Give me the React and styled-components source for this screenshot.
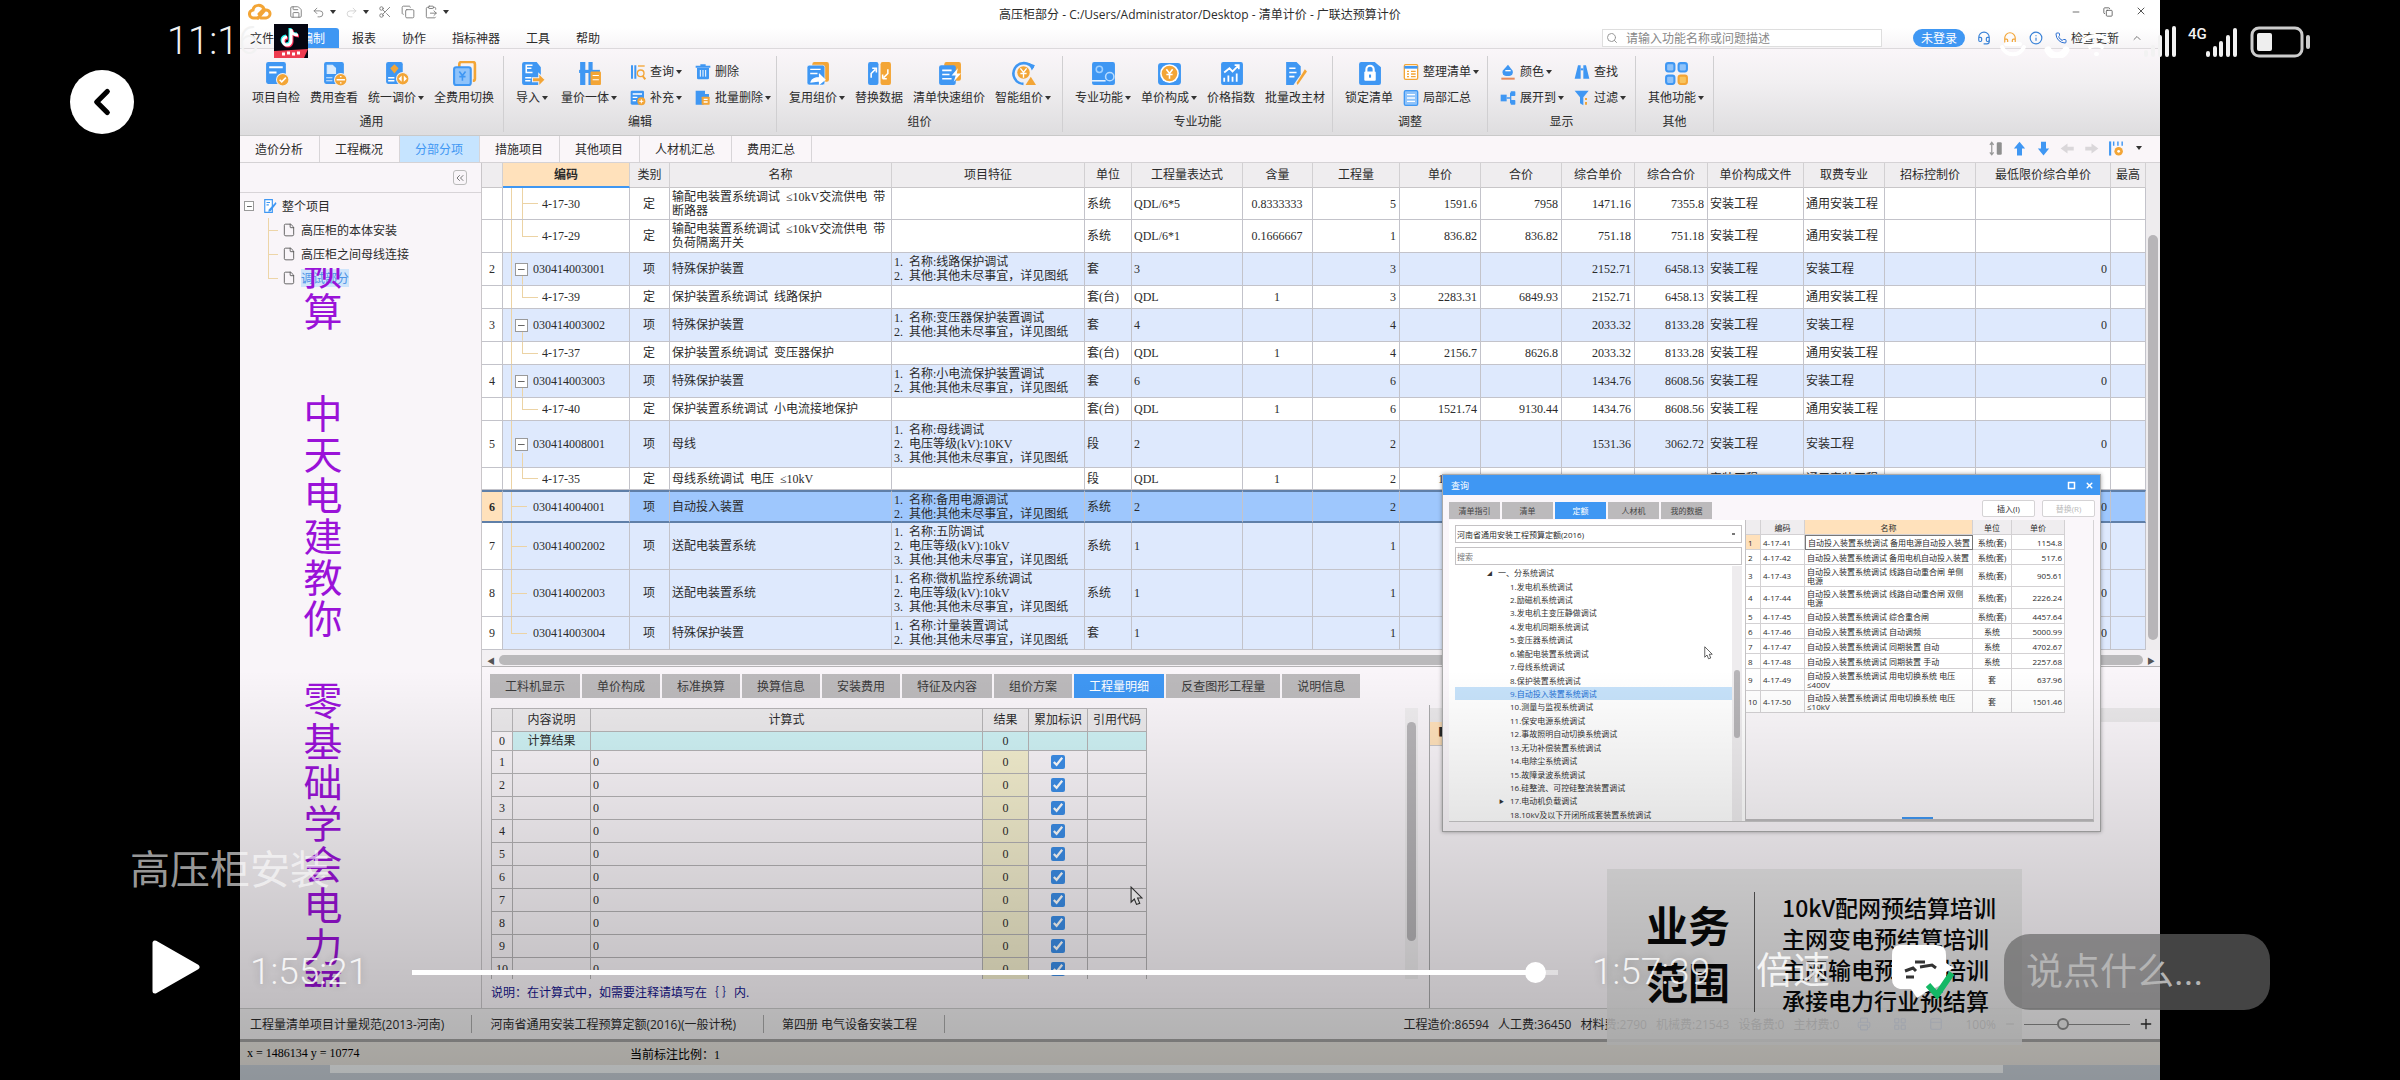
import React from 'react';
import styled, { createGlobalStyle, css } from 'styled-components';
import {
    Save, Undo2, Redo2, Scissors, Copy, ClipboardPaste, Search, Headphones, Headset, Info, Phone,
    ChevronUp, ChevronLeft, ChevronsLeft, File, X, Minus, Plus, Printer, LayoutGrid, PanelTop,
} from 'lucide-react';

const BLUE = '#3f97f3';
const ORANGE = '#f3a536';

const GlobalStyle = createGlobalStyle`
    * { box-sizing: border-box; }
    body {
        margin: 0;
        background: #000;
        overflow: hidden;
        font-family: 'Open Sans', 'Noto Sans CJK SC', sans-serif;
        font-size: 12px;
        color: #2b2b2b;
    }
    button, input, select { font: inherit; color: inherit; margin: 0; }
    button { border: 0; padding: 0; background: none; cursor: pointer; }
    table { border-spacing: 0; table-layout: fixed; }
`;

const Page = styled.main`
    position: relative;
    display: flex;
    height: 100vh;
    padding: 0 10%;
    background: #000;
`;

const Desktop = styled.div`
    position: relative;
    display: flex;
    flex: 1;
    flex-direction: column;
    min-width: 0;
    overflow: hidden;
    background: #f9f5f9;
    white-space: nowrap;
`;

const TitleBar = styled.header`
    display: grid;
    grid-template-columns: 1fr auto 1fr;
    align-items: center;
    height: 28px;
    background: #fff;
`;

const QuickTools = styled.div`
    display: flex;
    align-items: center;
    gap: 9px;
    padding: 0 0 4px 8px;
    color: #777;
    > svg:first-child { margin-right: 8px; }
    > span { margin-left: -4px; }
`;

const WindowButtons = styled.div`
    display: flex;
    justify-content: flex-end;
    align-items: center;
    gap: 22px;
    padding: 0 13px 4px 0;
    color: #555;
`;

const MenuBar = styled.nav`
    display: flex;
    align-items: center;
    height: 21px;
    background: linear-gradient(#fff, #f6f4f6);
    border-bottom: 1px solid #dcd9dc;
`;

const MenuItem = styled.button`
    height: 20px;
    padding: 0 13px;
    &:first-child { padding-left: 10px; }
    ${props => props.$active && css`
        padding: 0 14px;
        color: #fff;
        background: ${BLUE};
        border-radius: 3px 3px 0 0;
    `}
`;

const SearchBox = styled.label`
    display: flex;
    align-items: center;
    gap: 8px;
    width: 280px;
    height: 18px;
    margin-left: auto;
    padding: 0 3px;
    color: #999;
    background: #fff;
    border: 1px solid #dedede;
    input { flex: 1; min-width: 0; padding: 0; border: 0; outline: 0; background: none; }
    input::placeholder { color: #888; }
`;

const Account = styled.div`
    display: flex;
    align-items: center;
    gap: 12px;
    width: 278px;
    padding-left: 31px;
    color: #3a83d8;
`;

const LoginButton = styled.button`
    width: 52px;
    height: 18px;
    color: #fff;
    background: ${BLUE};
    border-radius: 9px;
`;

const UpdateButton = styled.button`
    display: flex;
    align-items: center;
    gap: 4px;
    color: #333;
    svg { color: #2b6fd2; }
`;

const Ribbon = styled.section`
    display: flex;
    height: 87px;
    padding: 7px 0 3px;
    background: linear-gradient(#faf6f9, #f1eff1 40%, #dedddf);
    border-bottom: 1px solid #c9c9c9;
`;

const RibbonGroup = styled.div`
    display: flex;
    flex-direction: column;
    width: ${props => props.$width}px;
    border-right: 1px solid #d0cfd1;
`;

const GroupTools = styled.div`
    display: flex;
    gap: ${props => props.$gap || 10}px;
    height: 58px;
    padding: 5px 0 0 12px;
`;

const GroupName = styled.div`
    line-height: 20px;
    text-align: center;
`;

const BigButton = styled.button`
    display: flex;
    flex-direction: column;
    align-items: center;
    gap: 3px;
    line-height: 18px;
`;

const SmallColumn = styled.div`
    display: flex;
    flex-direction: column;
    gap: 8px;
    padding-top: 2px;
`;

const SmallButton = styled.button`
    display: flex;
    align-items: center;
    gap: 4px;
    height: 18px;
    line-height: 18px;
`;

const Caret = styled.span`
    display: inline-block;
    margin-left: 2px;
    vertical-align: 2px;
    border: 3px solid transparent;
    border-top: 4px solid #333;
    border-bottom: 0;
`;

const SheetTabs = styled.nav`
    display: flex;
    height: 27px;
    background: #faf6f9;
    border-bottom: 1px solid #d5d2d5;
`;

const SheetTab = styled.button`
    padding: 0 16px 0 15px;
    border-right: 1px solid #d8d5d8;
    ${props => props.$active && css`
        color: #3f97f3;
        background: #c6e4ff;
    `}
`;

const SheetTools = styled.div`
    display: flex;
    align-items: center;
    gap: 9px;
    margin-left: auto;
    padding: 0 18px 2px 0;
`;

const Body = styled.div`
    display: flex;
    flex: 1;
    min-height: 0;
`;

const Sidebar = styled.aside`
    width: 242px;
    border-right: 1px solid #c9c6c9;
`;

const SidebarHead = styled.div`
    display: flex;
    justify-content: flex-end;
    align-items: center;
    height: 30px;
    padding-right: 14px;
    border-bottom: 1px solid #d8d4d8;
    button {
        display: flex;
        align-items: center;
        width: 14px;
        height: 15px;
        color: #777;
        border: 1px solid #bbb;
        border-radius: 3px;
    }
`;

const ProjectTree = styled.ul`
    margin: 0;
    padding: 1px 0 0 4px;
    list-style: none;
    ul {
        margin: 0;
        padding: 0;
        list-style: none;
        background:
            linear-gradient(#edd5a8, #edd5a8) 24px 0 / 1px 60px no-repeat;
    }
    li > div {
        display: flex;
        align-items: center;
        height: 24px;
    }
`;

const RootNode = styled.div`
    gap: 5px;
    svg { margin-left: 4px; }
`;

const LeafNode = styled.div`
    gap: 5px;
    padding-left: 38px;
    color: ${props => props.$active ? '#4d93e6' : 'inherit'};
    background: linear-gradient(#edd5a8, #edd5a8) 24px 50% / 10px 1px no-repeat;
    svg { color: #555; }
    span { background: ${props => props.$active ? '#cfe5fb' : 'none'}; }
`;

const Expander = styled.button`
    width: ${props => props.$size || 10}px;
    height: ${props => props.$size || 10}px;
    padding: 0 2px;
    background: linear-gradient(#666, #666) center / 60% 1px no-repeat #fff;
    border: 1px solid #9a9a9a;
`;

const Work = styled.section`
    display: flex;
    flex: 1;
    flex-direction: column;
    min-width: 0;
`;

const GridArea = styled.div`
    display: flex;
`;

const VScroll = styled.div`
    flex: none;
    width: ${props => props.$width}px;
    padding: ${props => props.$offset}px 2px 0;
    background: #eeecee;
    &::after {
        content: '';
        display: block;
        height: ${props => props.$thumb}px;
        background: #b7b5b8;
        border-radius: 5px;
    }
`;

const BillTable = styled.table`
    flex: 1;
    width: 100%;
    min-width: 0;
    background: #fff;
    font-family: 'Liberation Serif', 'Noto Sans CJK SC', serif;
    line-height: 14px;
    th {
        height: 25px;
        padding: 0;
        font-weight: 400;
        overflow: hidden;
        background: #efedef;
        border-right: 1px solid #d2d0d2;
        border-bottom: 1px solid #c8c6c8;
    }
    td {
        padding: 0 3px 0 2px;
        border-right: 1px solid #c3c3ca;
        border-bottom: 1px solid #c3c3ca;
        white-space: pre;
        overflow: hidden;
    }
`;

const CodeHead = styled.th`
    && {
        font-weight: 700;
        background: #ffe1bb;
        border-bottom: 2px solid ${BLUE};
    }
`;

const BillRow = styled.tr`
    height: ${props => props.$height}px;
    background: ${props => props.$item ? '#dee9fd' : '#fff'};
    ${props => props.$selected && css`
        background: #9ec7fd;
        td { border-top: 2px solid #5f7fa8; border-bottom: 2px solid #5f7fa8; }
    `}
`;

const RowNumber = styled.td`
    && {
        padding: 0;
        text-align: center;
        background: ${props => props.$selected ? '#ffe1bb' : '#fff'};
        font-weight: ${props => props.$selected ? 700 : 400};
    }
`;

const line = 'linear-gradient(#ecd3a4, #ecd3a4)';
const branches = {
    sub: `${line} 19px 0 / 1px 50% no-repeat, ${line} 19px 50% / 16px 1px no-repeat,`,
    subOpen: `${line} 19px 0 / 1px 100% no-repeat, ${line} 19px 50% / 16px 1px no-repeat,`,
    open: `${line} 19px 100% / 1px 30% no-repeat,`,
    leaf: `${line} 8px 50% / 16px 1px no-repeat,`,
};

const CodeCell = styled.td`
    && {
        padding-left: ${props => ({ sub: 39, subOpen: 39, open: 12, leaf: 30 })[props.$kind]}px;
        background:
            ${props => branches[props.$kind]}
            ${line} 8px 0 / 1px ${props => props.$last ? '50%' : '100%'} no-repeat
            ${props => props.$kind.startsWith('sub') ? '#fff' : '#dee9fd'};
    }
    button { margin-right: 5px; vertical-align: middle; }
`;

const Cell = styled.td`
    text-align: ${props => props.$align || 'left'};
`;

const HScroll = styled.div`
    display: flex;
    align-items: center;
    gap: 4px;
    height: 17px;
    padding: 4px 5px 0;
    background: #f3f0f3;
    border-bottom: 1px solid #b5b3b5;
    font-size: 8px;
    color: #555;
    &::before { content: '◀'; }
    &::after { content: '▶'; }
    span { flex: 1; height: 10px; background: #bab9bb; border-radius: 5px; }
`;

const DetailTabs = styled.nav`
    display: flex;
    gap: 2px;
    padding: 7px 8px;
`;

const DetailTab = styled.button`
    height: 24px;
    padding: 0 15px;
    color: ${props => props.$active ? '#fff' : '#3a3a3a'};
    background: ${props => props.$active ? BLUE : '#bbb9bb'};
`;

const Lower = styled.div`
    display: flex;
    flex: 1;
    min-height: 0;
`;

const Formulas = styled.div`
    display: flex;
    flex-direction: column;
    flex: none;
    width: 948px;
    padding-top: 3px;
    border-right: 1px solid #a9a9ab;
`;

const FormulaScroll = styled.div`
    display: flex;
    flex: 1;
    justify-content: space-between;
    min-height: 0;
    padding: 0 11px 0 9px;
    overflow: hidden;
`;

const FormulaTable = styled.table`
    width: 655px;
    height: max-content;
    border-top: 1px solid #b5b3b5;
    border-left: 1px solid #b5b3b5;
    font-family: 'Liberation Serif', 'Noto Sans CJK SC', serif;
    th, td {
        padding: 0 2px;
        line-height: 16px;
        border-right: 1px solid #b5b3b5;
        border-bottom: 1px solid #b5b3b5;
    }
    th { height: 23px; font-weight: 400; background: #ebe9eb; }
    tr { height: 23px; }
`;

const FormulaCell = styled.td`
    text-align: ${props => props.$left ? 'left' : 'center'};
    background: ${props => props.$result ? '#f4efcf' : 'transparent'};
    input { display: block; width: 14px; height: 14px; margin: 0 auto; accent-color: #3c8ee8; }
`;

const TotalRow = styled.tr`
    && { height: 19px; }
    td { text-align: center; background: #cff2f5; }
    td:first-child { background: #faf6f9; }
`;

const Hint = styled.p`
    margin: 0;
    padding: 4px 9px 6px;
    line-height: 19px;
    color: #14148c;
`;

const CodePane = styled.div`
    flex: 1;
    padding-top: 3px;
    &::before {
        content: '';
        display: block;
        height: 14px;
        background: #e9e7e9;
    }
    &::after {
        content: '■';
        display: block;
        width: 60px;
        height: 23px;
        padding-left: 8px;
        line-height: 22px;
        background: #ffe1bb;
        border-bottom: 1px solid #c9c6c9;
    }
`;

const StatusBar = styled.footer`
    display: flex;
    align-items: center;
    height: 34px;
    padding: 0 6px 0 10px;
    background: #efeeef;
    border-top: 1px solid #c9c9c9;
    border-bottom: 3px solid #a2a1a0;
`;

const StatusPart = styled.span`
    margin-right: 18px;
    padding-right: 27px;
    border-right: 1px solid #aaa;
`;

const Totals = styled.span`
    display: flex;
    gap: 9px;
    margin-left: auto;
`;

const ViewButtons = styled.div`
    display: flex;
    gap: 22px;
    padding: 0 22px 0 18px;
    color: #5a83d8;
    button { display: flex; }
`;

const Zoom = styled.div`
    display: flex;
    align-items: center;
    gap: 8px;
    input {
        width: 106px;
        height: 20px;
        appearance: none;
        background: linear-gradient(#888, #888) center / 100% 1px no-repeat;
    }
    input::-webkit-slider-thumb {
        width: 12px;
        height: 12px;
        appearance: none;
        background: #e6e6e6;
        border: 2px solid #8b8b8b;
        border-radius: 50%;
    }
`;

const CadBar = styled.footer`
    display: flex;
    align-items: center;
    height: 23px;
    padding-left: 7px;
    background: #e3e0da;
    font-family: 'Liberation Serif', 'Noto Sans CJK SC', serif;
    color: #000;
    span { width: 383px; }
`;

const CadStrip = styled.div`
    height: 15px;
    padding: 0 157px 0 90px;
    background: #c6ced6;
    &::before {
        content: '';
        display: block;
        height: 8px;
        background: #f0f4f5;
    }
`;

const Dialog = styled.section`
    position: absolute;
    top: 474px;
    right: 59px;
    bottom: 248px;
    display: flex;
    flex-direction: column;
    width: 659px;
    background: #faf6fa;
    border: 1px solid #aaa;
    box-shadow: 0 0 4px rgba(0, 0, 0, 0.35);
    font-size: 8px;
`;

const DialogTitle = styled.header`
    display: flex;
    flex: none;
    align-items: center;
    justify-content: space-between;
    height: 20px;
    padding: 0 6px 0 8px;
    font-size: 9px;
    color: #fff;
    background: ${BLUE};
    div { display: flex; gap: 9px; }
`;

const DialogBar = styled.div`
    display: flex;
    align-items: flex-end;
    gap: 2px;
    height: 24px;
    padding-left: 6px;
`;

const DialogTab = styled.button`
    width: 51px;
    height: 17px;
    color: ${props => props.$active ? '#fff' : '#444'};
    background: ${props => props.$active ? BLUE : '#bcbabc'};
`;

const DialogActions = styled.div`
    display: flex;
    gap: 7px;
    margin-left: auto;
    padding: 0 5px 2px 0;
    button {
        width: 53px;
        height: 17px;
        background: #fff;
        border: 1px solid #d5d3d5;
        border-radius: 2px;
    }
    button:disabled { color: #bbb; }
`;

const DialogBody = styled.div`
    display: flex;
    flex: 1;
    min-height: 0;
    margin: 1px 6px 9px;
    border-bottom: 1px solid #c9c7c9;
`;

const NormPane = styled.div`
    display: flex;
    flex-direction: column;
    width: 297px;
    padding: 5px 3px 0 6px;
    background: #fff;
    border-right: 1px solid #c4c2c4;
    > select, > input {
        flex: none;
        width: 100%;
        height: 18px;
        margin-bottom: 4px;
        padding: 0 1px;
        appearance: none;
        background: #fff;
        border: 1px solid #c4c2c4;
        border-radius: 0;
    }
    > select {
        background: linear-gradient(#777, #777) 98% 50% / 3px 2px no-repeat #fff;
    }
    > input { margin-bottom: 1px; }
`;

const NormList = styled.div`
    display: flex;
    flex: 1;
    min-height: 0;
    ul {
        display: flex;
        flex: 1;
        flex-direction: column;
        margin: 0;
        padding: 0;
        list-style: none;
        overflow: hidden;
    }
`;

const NormItem = styled.li`
    display: flex;
    flex: 1;
    align-items: center;
    min-height: 0;
    padding-left: ${props => props.$root ? 32 : 44}px;
    color: ${props => props.$active ? '#1c6fd4' : '#333'};
    background: ${props => props.$active ? '#c6e2fa' : 'none'};
    &::before {
        content: '${props => props.$mark || ''}';
        width: 11px;
        font-size: 5px;
    }
`;

const NormResults = styled.div`
    flex: 1;
    background: linear-gradient(90deg, transparent 45%, ${BLUE} 45%, ${BLUE} 54%, transparent 54%) bottom / 100% 2px no-repeat, #faf7fa;
    border-right: 1px solid #d5d3d5;
    border-bottom: 2px solid #bdbbbd;
`;

const NormTable = styled.table`
    width: 319px;
    background: #fff;
    line-height: 9px;
    th, td {
        padding: 0 2px;
        font-weight: 400;
        white-space: pre;
        overflow: hidden;
        border-right: 1px solid #d3d1d3;
        border-bottom: 1px solid #d3d1d3;
    }
    th { height: 15px; background: #efedef; }
    th:nth-child(3) { background: #ffe1bb; }
    tbody tr:first-child td:first-child { background: #ffe1bb; }
    tbody tr:first-child td:nth-child(3) { border: 1px solid #777; }
    td:nth-child(4) { text-align: center; }
    td:nth-child(5) { text-align: right; }
`;

const NormRow = styled.tr`
    height: ${props => props.$tall ? 22 : 15}px;
`;

const Slogan = styled.div`
    position: absolute;
    top: 268px;
    left: 63px;
    width: 40px;
    height: 719px;
    overflow: hidden;
    font-size: 39px;
    line-height: 41px;
    text-align: center;
    color: #9a12d8;
    div:first-child { margin-top: -19px; }
    div { margin-bottom: 61px; white-space: pre-line; }
    div + div { margin-bottom: 41px; }
`;

const Banner = styled.section`
    position: absolute;
    right: 138px;
    bottom: 35px;
    display: flex;
    gap: 24px;
    width: 415px;
    height: 176px;
    padding: 23px 0 0 39px;
    color: #080808;
    background: rgba(228, 228, 228, 0.88);
    font-weight: 500;
    h2 {
        margin: 0;
        padding-top: 3px;
        font-family: 'Noto Sans CJK SC', sans-serif;
        font-size: 42px;
        font-weight: 700;
        line-height: 57px;
    }
    p {
        margin: 0;
        padding-left: 27px;
        border-left: 1px solid #555;
        height: 120px;
        font-family: 'Noto Sans CJK SC', sans-serif;
        font-size: 23px;
        line-height: 31px;
    }
`;

const Dim = styled.div`
    position: absolute;
    inset: 62% 0 0;
    background: linear-gradient(rgba(0, 0, 0, 0), rgba(0, 0, 0, 0.28));
    pointer-events: none;
`;

const Pointer = styled.svg`
    position: absolute;
    left: ${props => props.$left}px;
    top: ${props => props.$top}px;
`;

const PhoneStatus = styled.div`
    position: absolute;
    top: 18px;
    left: 167px;
    right: 80px;
    display: flex;
    align-items: center;
    height: 46px;
    font: 300 38px/46px Roboto, sans-serif;
    color: #f2f2f2;
    > svg:first-of-type { margin: 0 auto 0 15px; }
`;

const BackButton = styled.button`
    position: absolute;
    top: 70px;
    left: 70px;
    display: flex;
    align-items: center;
    justify-content: center;
    width: 64px;
    height: 64px;
    color: #000;
    background: #fff;
    border-radius: 50%;
`;

const VideoTitle = styled.h1`
    position: absolute;
    bottom: 187px;
    left: 130px;
    margin: 0;
    font: 400 40px/52px 'Noto Sans CJK SC', sans-serif;
    color: rgba(255, 255, 255, 0.62);
`;

const Controls = styled.div`
    position: absolute;
    bottom: 70px;
    left: 152px;
    right: 130px;
    display: flex;
    align-items: center;
    height: 76px;
    font: 400 37px/44px Roboto, 'Noto Sans CJK SC', sans-serif;
    color: rgba(255, 255, 255, 0.85);
`;

const Time = styled.time`
    width: ${props => props.$width}px;
    font-weight: 300;
    text-shadow: 0 0 8px rgba(0, 0, 0, 0.2);
`;

const Progress = styled.input`
    flex: 1;
    height: 21px;
    min-width: 0;
    margin: 0 34px 0 0;
    appearance: none;
    background:
        linear-gradient(90deg, #fff 98%, rgba(255, 255, 255, 0.45) 98%) center / 100% 5px no-repeat;
    &::-webkit-slider-thumb {
        width: 21px;
        height: 21px;
        appearance: none;
        background: #fff;
        border-radius: 50%;
    }
`;

const CommentInput = styled.input`
    width: 266px;
    height: 76px;
    padding: 0 22px;
    border: 0;
    border-radius: 26px;
    outline: 0;
    background: rgba(100, 100, 100, 0.68);
    &::placeholder { color: #b4b4b4; opacity: 1; }
`;

// every ribbon drawing lives on a 24x24 board
const drawings = {
    check: <><rect x="2" y="1" width="19" height="21" rx="2" fill={BLUE} /><path d="M5 6h13M5 11h7" stroke="#fff" strokeWidth="2" /><circle cx="18" cy="18" r="6" fill={ORANGE} stroke="#f3f1f3" /><path d="M15 18l2 2 4-4" fill="none" stroke="#fff" strokeWidth="1.5" /></>,
    fee: <><rect x="2" y="1" width="19" height="21" rx="2" fill={BLUE} /><path d="M5 4h5l3 3v5H5zM4 16h6M4 19h6" fill="#d9ebfd" stroke="#d9ebfd" /><circle cx="18" cy="18" r="6" fill={ORANGE} stroke="#f3f1f3" /><path d="M14 18h8M18 14.500v1M18 20.500v1" stroke="#fff" strokeWidth="1.500" /></>,
    adjust: <><rect x="2" y="1" width="16" height="21" rx="2" fill={BLUE} /><path d="M10 3l4 4-4 5-4-5z" fill={ORANGE} /><path d="M4 16h6M4 19h6" stroke="#fff" strokeWidth="1.500" /><circle cx="18" cy="17" r="6" fill={ORANGE} stroke="#f3f1f3" /><path d="M17 14l-3 3 3 3zM19 14l3 3-3 3z" fill="#fff" /></>,
    swap: <><path d="M7 6V3a2 2 0 0 1 2-2h11a2 2 0 0 1 2 2v14a2 2 0 0 1-2 2" fill="none" stroke={ORANGE} strokeWidth="2.500" /><rect x="2" y="6" width="16" height="17" rx="2" fill="#8fc3fa" stroke={BLUE} strokeWidth="2" /><path d="M7 10l3 4 3-4M10 14v5M7 15h6" fill="none" stroke={BLUE} strokeWidth="1.500" /></>,
    importer: <><path d="M4 1h12l4 5v15a2 2 0 0 1-2 2H4a2 2 0 0 1-2-2V3a2 2 0 0 1 2-2z" fill={BLUE} /><path d="M12 4H6v7h6M6 7h5M5 16h6M5 19h5" fill="none" stroke="#fff" strokeWidth="1.500" /><path d="M12 16h6v-4l6 6-6 6v-4h-6z" fill={ORANGE} stroke="#f3f1f3" /></>,
    merge: <><path d="M3 1h5v22H3zM11 1h4v22h-4z" fill={BLUE} /><path d="M2 10h20" stroke={BLUE} strokeWidth="3" /><rect x="13" y="10" width="10" height="13" rx="1" fill={ORANGE} /><path d="M15 14h6M15 18h6" stroke="#fff" /></>,
    query: <><path d="M3 2v20M8 2v20" stroke={BLUE} strokeWidth="3" /><path d="M12 3h10" stroke={ORANGE} strokeWidth="2" /><circle cx="16" cy="14" r="5" fill="none" stroke={ORANGE} strokeWidth="2" /><path d="M19 18l4 5" stroke={ORANGE} strokeWidth="3" /></>,
    trash: <><path d="M3 6h18v15a2 2 0 0 1-2 2H5a2 2 0 0 1-2-2z" fill={BLUE} /><path d="M1 4h22M8 2h8" stroke={BLUE} strokeWidth="3" /><path d="M8 9v10M12 9v10M16 9v10" stroke="#fff" strokeWidth="1.500" /></>,
    supply: <><rect x="1" y="1" width="20" height="21" rx="2" fill={BLUE} /><path d="M4 6h14M4 11h7M4 16h5" stroke="#fff" strokeWidth="2" /><circle cx="17" cy="17" r="6" fill={ORANGE} /><path d="M14 17h6M17 14v6" stroke="#fff" strokeWidth="1.500" /></>,
    batch: <><path d="M1 1h14v5h6v6h-8v10H1z" fill={BLUE} /><rect x="10" y="10" width="12" height="12" rx="1" fill={ORANGE} /><path d="M13 14h6M13 18h6" stroke="#fff" strokeWidth="2" /></>,
    reuse: <><rect x="7" y="1" width="16" height="19" rx="2" fill={ORANGE} /><rect x="2" y="4" width="17" height="19" rx="2" fill={BLUE} stroke="#fff" strokeWidth=".5" /><path d="M5 8h10M5 12h7M6 20c1-3 4-4 8-4v-3l5 5-5 4v-3z" fill="#fff" stroke="#fff" strokeWidth="1.300" /></>,
    replace: <><rect x="1" y="1" width="10" height="22" rx="2" fill={BLUE} /><rect x="13" y="1" width="10" height="22" rx="2" fill={ORANGE} /><path d="M4 16v-4l4-4M20 8v4l-4 4M5 7h4v4M15 17v-4M15 17h4" fill="none" stroke="#fff" strokeWidth="1.500" /></>,
    quick: <><rect x="7" y="1" width="16" height="18" rx="2" fill={ORANGE} /><rect x="2" y="4" width="16" height="19" rx="2" fill={BLUE} /><path d="M5 9h9M5 13h7M5 17h9" stroke="#fff" strokeWidth="1.500" /><path d="M20 7l-6 7h4l-2 6 7-8h-4z" fill="#fff" /></>,
    smart: <><path d="M21 7A10 10 0 1 0 12 22" fill="none" stroke={BLUE} strokeWidth="2.500" /><circle cx="12" cy="11" r="6" fill={ORANGE} /><path d="M9 7l3 4 3-4M12 11v5M9 12h6" fill="none" stroke="#fff" strokeWidth="1.300" /><path d="M19 15l5 8H14z" fill={ORANGE} /><path d="M17 2l6 2-3 5z" fill={BLUE} /></>,
    pro: <><rect x="1" y="1" width="22" height="22" rx="2" fill={BLUE} /><circle cx="8" cy="8" r="3" fill="none" stroke="#9fd0ff" strokeWidth="1.500" /><circle cx="18" cy="15" r="4" fill={BLUE} stroke="#b8dcff" strokeWidth="1.500" /><path d="M1 19h13" stroke="#e5f2ff" strokeWidth="1.500" /></>,
    price: <><rect x="1" y="2" width="22" height="21" rx="3" fill={BLUE} /><circle cx="12" cy="12" r="9" fill="#fff" /><circle cx="12" cy="12" r="7.500" fill={ORANGE} /><path d="M9 8l3 4 3-4M12 12v5M9 13h6" fill="none" stroke="#fff" strokeWidth="1.500" /></>,
    index: <><rect x="2" y="1" width="21" height="22" rx="2" fill={BLUE} /><path d="M5 20v-4M9 20v-6M13 20v-5M17 20v-8M5 11l5-4 3 3 6-6M15 4h4v4" fill="none" stroke="#fff" strokeWidth="1.700" /></>,
    material: <><path d="M3 1h10l4 4v8l-7 10H3z" fill={BLUE} /><path d="M6 7h6M6 11h7M6 15h5" stroke="#fff" strokeWidth="1.500" /><path d="M21 8l-8 13 1 2 9-13z" fill={ORANGE} /></>,
    lock: <><path d="M4 1h13l6 5v15a2 2 0 0 1-2 2H4a2 2 0 0 1-2-2V3a2 2 0 0 1 2-2z" fill={BLUE} /><rect x="7" y="10" width="11" height="9" rx="1" fill="#fff" /><path d="M9 11V8a3 3 0 0 1 7 0v3" fill="none" stroke="#fff" strokeWidth="2" /><path d="M12.500 13v3" stroke={BLUE} strokeWidth="2" /></>,
    tidy: <><rect x="2" y="1" width="20" height="22" rx="2" fill="#fff" stroke={ORANGE} strokeWidth="2" /><path d="M2 5h20" stroke={BLUE} strokeWidth="4" /><path d="M6 11h3M6 15h3M6 19h3M12 11h7M12 15h7M12 19h7" stroke={ORANGE} strokeWidth="2" /></>,
    part: <><rect x="2" y="1" width="20" height="22" rx="2" fill="#8fc3fa" stroke={BLUE} strokeWidth="2" /><path d="M6 7h12M6 12h12M6 17h12" stroke="#fff" strokeWidth="2" /></>,
    paint: <><path d="M12 1L4 10a6 6 0 0 0 5 8h5a6 6 0 0 0 5-8z" fill={BLUE} /><path d="M8 10h8" stroke="#fff" strokeWidth="2" /><path d="M2 22h20" stroke="#e58a5c" strokeWidth="3" /></>,
    expand: <><rect x="1" y="7" width="9" height="10" fill={BLUE} /><path d="M10 12h6V5h2M16 12v7h2" fill="none" stroke={BLUE} strokeWidth="2" /><rect x="16" y="2" width="7" height="7" rx="1" fill={BLUE} /><rect x="16" y="15" width="7" height="7" rx="1" fill={BLUE} /></>,
    find: <><path d="M6 2h4v20H1zM14 2h4l5 20h-9z" fill={BLUE} /><path d="M10 8h4" stroke={BLUE} strokeWidth="3" /></>,
    filter: <><path d="M1 1h21l-8 10v12l-5-3v-9z" fill={BLUE} /><path d="M18 12v3M18 18v4" stroke={ORANGE} strokeWidth="3" /></>,
    other: <><rect x="2" y="2" width="8" height="8" rx="2" fill="#8fc3fa" stroke={BLUE} strokeWidth="2" /><rect x="14" y="2" width="8" height="8" rx="2" fill="#8fc3fa" stroke={BLUE} strokeWidth="2" /><rect x="2" y="14" width="8" height="8" rx="2" fill="#8fc3fa" stroke={BLUE} strokeWidth="2" /><rect x="14" y="14" width="8" height="8" rx="2" fill="#f8c45f" stroke={ORANGE} strokeWidth="2" /></>,
    project: <><path d="M3 1h13v22H3z" fill="#fff" stroke={BLUE} strokeWidth="2" /><path d="M22 5L10 18l-1 4 4-1L23 8z" fill={BLUE} /><path d="M6 6h6M6 10h4" stroke={BLUE} strokeWidth="2" /></>,
    columns: <><path d="M3 2v20" stroke={BLUE} strokeWidth="3" /><path d="M8 2v6M14 2v6M20 2v6" stroke={BLUE} strokeWidth="2" /><circle cx="15" cy="16" r="6" fill={ORANGE} /><circle cx="15" cy="16" r="2" fill="#fff" /></>,
    rows: <><path d="M6 3v18M3 6l3-4 3 4M3 18l3 4 3-4" fill="none" stroke="#999" strokeWidth="2" /><rect x="14" y="2" width="8" height="20" rx="2" fill="#8f8f8f" /></>,
    up: <path d="M12 1l9 11h-5v11H8V12H3z" fill={BLUE} />,
    down: <path d="M12 23l9-11h-5V1H8v11H3z" fill={BLUE} />,
    left: <path d="M1 12l11-8v5h10v6H12v5z" fill="#dad7da" />,
    right: <path d="M23 12L12 4v5H2v6h10v5z" fill="#dad7da" />,
};

const Drawing = ({ name, size = 16 }) => (
    <svg width={size} height={size} viewBox="0 0 24 24" aria-hidden="true">{drawings[name]}</svg>
);

const groups = [
    { name: '通用', width: 264, big: [['check', '项目自检'], ['fee', '费用查看'], ['adjust', '统一调价', 1], ['swap', '全费用切换']] },
    {
        name: '编辑', width: 273, gap: 13, big: [['importer', '导入', 1], ['merge', '量价一体', 1]],
        small: [[['query', '查询', 1], ['supply', '补充', 1]], [['trash', '删除'], ['batch', '批量删除', 1]]],
    },
    { name: '组价', width: 286, big: [['reuse', '复用组价', 1], ['replace', '替换数据'], ['quick', '清单快速组价'], ['smart', '智能组价', 1]] },
    { name: '专业功能', width: 270, big: [['pro', '专业功能', 1], ['price', '单价构成', 1], ['index', '价格指数'], ['material', '批量改主材']] },
    { name: '调整', width: 155, big: [['lock', '锁定清单']], small: [[['tidy', '整理清单', 1], ['part', '局部汇总']]] },
    { name: '显示', width: 148, big: [], small: [[['paint', '颜色', 1], ['expand', '展开到', 1]], [['find', '查找'], ['filter', '过滤', 1]]] },
    { name: '其他', width: 78, big: [['other', '其他功能', 1]] },
];

const billColumns = [
    ['', 21], ['编码', 127], ['类别', 40], ['名称', 222], ['项目特征', 193], ['单位', 47], ['工程量表达式', 111],
    ['含量', 70], ['工程量', 87], ['单价', 81], ['合价', 81], ['综合单价', 73], ['综合合价', 73], ['单价构成文件', 96],
    ['取费专业', 81], ['招标控制价', 91], ['最低限价综合单价', 135], ['最高', 35],
];

const more = '其他:其他未尽事宜，详见图纸';

// no, kind, code, name, feature, unit, expression, content, quantity, price, sum, full price, full sum, height
const bill = [
    ['', 'subOpen', '4-17-30', '输配电装置系统调试  ≤10kV交流供电  带\n断路器', '', '系统', 'QDL/6*5', '0.8333333', '5', '1591.6', '7958', '1471.16', '7355.8', 32],
    ['', 'sub', '4-17-29', '输配电装置系统调试  ≤10kV交流供电  带\n负荷隔离开关', '', '系统', 'QDL/6*1', '0.1666667', '1', '836.82', '836.82', '751.18', '751.18', 33],
    ['2', 'open', '030414003001', '特殊保护装置', `1.  名称:线路保护调试\n2.  ${more}`, '套', '3', '', '3', '', '', '2152.71', '6458.13', 33],
    ['', 'sub', '4-17-39', '保护装置系统调试  线路保护', '', '套(台)', 'QDL', '1', '3', '2283.31', '6849.93', '2152.71', '6458.13', 23],
    ['3', 'open', '030414003002', '特殊保护装置', `1.  名称:变压器保护装置调试\n2.  ${more}`, '套', '4', '', '4', '', '', '2033.32', '8133.28', 33],
    ['', 'sub', '4-17-37', '保护装置系统调试  变压器保护', '', '套(台)', 'QDL', '1', '4', '2156.7', '8626.8', '2033.32', '8133.28', 23],
    ['4', 'open', '030414003003', '特殊保护装置', `1.  名称:小电流保护装置调试\n2.  ${more}`, '套', '6', '', '6', '', '', '1434.76', '8608.56', 33],
    ['', 'sub', '4-17-40', '保护装置系统调试  小电流接地保护', '', '套(台)', 'QDL', '1', '6', '1521.74', '9130.44', '1434.76', '8608.56', 23],
    ['5', 'open', '030414008001', '母线', `1.  名称:母线调试\n2.  电压等级(kV):10KV\n3.  ${more}`, '段', '2', '', '2', '', '', '1531.36', '3062.72', 47],
    ['', 'sub', '4-17-35', '母线系统调试  电压  ≤10kV', '', '段', 'QDL', '1', '2', '1624.36', '3248.72', '1531.36', '3062.72', 22],
    ['6', 'leaf', '030414004001', '自动投入装置', `1.  名称:备用电源调试\n2.  ${more}`, '系统', '2', '', '2', '', '', '0', '0', 33],
    ['7', 'leaf', '030414002002', '送配电装置系统', `1.  名称:五防调试\n2.  电压等级(kV):10kV\n3.  ${more}`, '系统', '1', '', '1', '', '', '0', '0', 47],
    ['8', 'leaf', '030414002003', '送配电装置系统', `1.  名称:微机监控系统调试\n2.  电压等级(kV):10kV\n3.  ${more}`, '系统', '1', '', '1', '', '', '0', '0', 47],
    ['9', 'leaf', '030414003004', '特殊保护装置', `1.  名称:计量装置调试\n2.  ${more}`, '套', '1', '', '1', '', '', '0', '0', 33],
];

const norms = [
    '1.发电机系统调试', '2.励磁机系统调试', '3.发电机主变压静做调试', '4.发电机同期系统调试', '5.变压器系统调试',
    '6.输配电装置系统调试', '7.母线系统调试', '8.保护装置系统调试', '9.自动投入装置系统调试', '10.测量与监视系统调试',
    '11.保安电源系统调试', '12.事故照明自动切换系统调试', '13.无功补偿装置系统调试', '14.电除尘系统调试',
    '15.故障录波系统调试', '16.硅整流、可控硅整流装置调试', '17.电动机负载调试', '18.10kV及以下开闭所成套装置系统调试',
];

const prefix = '自动投入装置系统调试 ';
const normRows = [
    ['备用电源自动投入装置', '系统(套)', '1154.8'],
    ['备用电机自动投入装置', '系统(套)', '517.6'],
    ['线路自动重合闸 单侧\n电源', '系统(套)', '905.61'],
    ['线路自动重合闸 双侧\n电源', '系统(套)', '2226.24'],
    ['综合重合闸', '系统(套)', '4457.64'],
    ['自动调频', '系统', '5000.99'],
    ['同期装置 自动', '系统', '4702.67'],
    ['同期装置 手动', '系统', '2257.68'],
    ['用电切换系统 电压\n≤400V', '套', '637.96'],
    ['用电切换系统 电压\n≤10kV', '套', '1501.46'],
];

const TopBars = () => (
    <>
        <TitleBar>
            <QuickTools>
                <svg width="24" height="18" viewBox="0 0 24 18" fill="none" stroke={ORANGE} strokeWidth="3" strokeLinecap="round">
                    <path d="M10 15H6a4 4 0 0 1-1-8c1-6 9-6 11-1l-5 5" />
                    <path d="M13 15h5c6-1 5-9-1-8l-7 8" />
                </svg>
                <Save size={14} strokeWidth={1.5} />
                <Undo2 size={13} strokeWidth={1.5} /><Caret />
                <Redo2 size={13} strokeWidth={1.5} color="#ccc" /><Caret />
                <Scissors size={14} strokeWidth={1.5} />
                <Copy size={14} strokeWidth={1.5} />
                <ClipboardPaste size={14} strokeWidth={1.5} />
                <Caret />
            </QuickTools>
            <span>高压柜部分 - C:/Users/Administrator/Desktop - 清单计价 - 广联达预算计价</span>
            <WindowButtons>
                <button aria-label="最小化"><Minus size={10} /></button>
                <button aria-label="还原"><Copy size={10} /></button>
                <button aria-label="关闭"><X size={12} /></button>
            </WindowButtons>
        </TitleBar>
        <MenuBar>
            {['文件', '编制', '报表', '协作', '指标神器', '工具', '帮助'].map(item => (
                <MenuItem key={item} $active={item === '编制'}>{item}</MenuItem>
            ))}
            <SearchBox>
                <Search size={12} />
                <input type="text" placeholder="请输入功能名称或问题描述" />
            </SearchBox>
            <Account>
                <LoginButton>未登录</LoginButton>
                <Headset size={14} />
                <Headphones size={14} color={ORANGE} />
                <Info size={14} />
                <UpdateButton><Phone size={12} />检查更新</UpdateButton>
                <ChevronUp size={12} color="#777" />
            </Account>
        </MenuBar>
        <Ribbon>
            {groups.map(group => (
                <RibbonGroup key={group.name} $width={group.width}>
                    <GroupTools $gap={group.gap}>
                        {group.big.map(([icon, label, caret]) => (
                            <BigButton key={label}>
                                <Drawing name={icon} size={25} />
                                <span>{label}{caret && <Caret />}</span>
                            </BigButton>
                        ))}
                        {group.small && group.small.map((column, i) => (
                            <SmallColumn key={i}>
                                {column.map(([icon, label, caret]) => (
                                    <SmallButton key={label}>
                                        <Drawing name={icon} />
                                        <span>{label}{caret && <Caret />}</span>
                                    </SmallButton>
                                ))}
                            </SmallColumn>
                        ))}
                    </GroupTools>
                    <GroupName>{group.name}</GroupName>
                </RibbonGroup>
            ))}
        </Ribbon>
        <SheetTabs>
            {['造价分析', '工程概况', '分部分项', '措施项目', '其他项目', '人材机汇总', '费用汇总'].map(tab => (
                <SheetTab key={tab} $active={tab === '分部分项'}>{tab}</SheetTab>
            ))}
            <SheetTools>
                <Drawing name="rows" size={15} />
                <Drawing name="up" size={15} />
                <Drawing name="down" size={15} />
                <Drawing name="left" size={15} />
                <Drawing name="right" size={15} />
                <Drawing name="columns" size={17} />
                <Caret />
            </SheetTools>
        </SheetTabs>
    </>
);

const Bill = () => (
    <GridArea>
        <BillTable>
            <colgroup>{billColumns.map(([name, width]) => <col key={name} width={width} />)}</colgroup>
            <thead>
                <tr>
                    {billColumns.map(([name]) => name === '编码' ? <CodeHead key={name}>{name}</CodeHead> : <th key={name}>{name}</th>)}
                </tr>
            </thead>
            <tbody>
                {bill.map(([no, kind, code, name, feature, unit, expr, content, qty, price, sum, fullPrice, fullSum, height]) => {
                    const item = !kind.startsWith('sub');
                    const selected = no === '6';
                    return (
                        <BillRow key={code} $height={height} $item={item} $selected={selected}>
                            <RowNumber $selected={selected}>{no}</RowNumber>
                            <CodeCell $kind={kind} $last={no === '9'}>
                                {kind === 'open' && <Expander $size={13} aria-label="折叠" />}{code}
                            </CodeCell>
                            <Cell $align="center">{item ? '项' : '定'}</Cell>
                            <Cell>{name}</Cell>
                            <Cell>{feature}</Cell>
                            <Cell>{unit}</Cell>
                            <Cell>{expr}</Cell>
                            <Cell $align="center">{content}</Cell>
                            <Cell $align="right">{qty}</Cell>
                            <Cell $align="right">{price}</Cell>
                            <Cell $align="right">{sum}</Cell>
                            <Cell $align="right">{fullPrice}</Cell>
                            <Cell $align="right">{fullSum}</Cell>
                            <Cell>安装工程</Cell>
                            <Cell>{item ? '安装工程' : '通用安装工程'}</Cell>
                            <Cell />
                            <Cell $align="right">{item ? '0' : ''}</Cell>
                            <Cell />
                        </BillRow>
                    );
                })}
            </tbody>
        </BillTable>
        <VScroll $width={14} $offset={72} $thumb={405} />
    </GridArea>
);

const FormulaPanel = () => (
    <Formulas>
        <FormulaScroll>
            <FormulaTable>
                <colgroup>{[21, 78, 392, 46, 59, 59].map((width, i) => <col key={i} width={width} />)}</colgroup>
                <thead>
                    <tr><th /><th>内容说明</th><th>计算式</th><th>结果</th><th>累加标识</th><th>引用代码</th></tr>
                </thead>
                <tbody>
                    <TotalRow><td>0</td><td>计算结果</td><td /><td>0</td><td /><td /></TotalRow>
                    {[1, 2, 3, 4, 5, 6, 7, 8, 9, 10].map(n => (
                        <tr key={n}>
                            <FormulaCell>{n}</FormulaCell>
                            <FormulaCell />
                            <FormulaCell $left>0</FormulaCell>
                            <FormulaCell $result>0</FormulaCell>
                            <FormulaCell><input type="checkbox" defaultChecked aria-label={`累加标识 ${n}`} /></FormulaCell>
                            <FormulaCell />
                        </tr>
                    ))}
                </tbody>
            </FormulaTable>
            <VScroll $width={13} $offset={14} $thumb={219} />
        </FormulaScroll>
        <Hint>说明：在计算式中，如需要注释请填写在｛ ｝内.</Hint>
    </Formulas>
);

const QueryDialog = () => (
    <Dialog>
        <DialogTitle>
            查询
            <div>
                <svg width="9" height="9" viewBox="0 0 9 9"><rect x="1.500" y="1.500" width="6" height="6" fill="none" stroke="#fff" strokeWidth="1.500" /></svg>
                <X size={9} strokeWidth={4} />
            </div>
        </DialogTitle>
        <DialogBar>
            {['清单指引', '清单', '定额', '人材机', '我的数据'].map(tab => (
                <DialogTab key={tab} $active={tab === '定额'}>{tab}</DialogTab>
            ))}
            <DialogActions>
                <button>插入(I)</button>
                <button disabled>替换(R)</button>
            </DialogActions>
        </DialogBar>
        <DialogBody>
            <NormPane>
                <select aria-label="定额库"><option>河南省通用安装工程预算定额(2016)</option></select>
                <input type="text" placeholder="搜索" aria-label="搜索" />
                <NormList>
                    <ul>
                        <NormItem $root $mark="◢">一、分系统调试</NormItem>
                        {norms.map((norm, i) => (
                            <NormItem key={norm} $active={i === 8} $mark={i === 16 ? '▶' : ''}>{norm}</NormItem>
                        ))}
                    </ul>
                    <VScroll $width={10} $offset={104} $thumb={68} />
                </NormList>
            </NormPane>
            <NormResults>
                <NormTable>
                    <colgroup>{[15, 44, 168, 39, 53].map((width, i) => <col key={i} width={width} />)}</colgroup>
                    <thead><tr><th /><th>编码</th><th>名称</th><th>单位</th><th>单价</th></tr></thead>
                    <tbody>
                        {normRows.map(([name, unit, price], i) => (
                            <NormRow key={name} $tall={name.includes('\n')}>
                                <td>{i + 1}</td><td>4-17-{41 + i}</td><td>{prefix + name}</td><td>{unit}</td><td>{price}</td>
                            </NormRow>
                        ))}
                    </tbody>
                </NormTable>
            </NormResults>
        </DialogBody>
    </Dialog>
);

const MousePointer = ({ left, top, size }) => (
    <Pointer $left={left} $top={top} width={size} height={size * 1.5} viewBox="0 0 12 18">
        <path d="M1 1v14l3-3 2 5 3-1-2-5h4z" fill="#fff" stroke="#333" />
    </Pointer>
);

const PhoneTop = () => (
    <>
        <PhoneStatus>
            11:16
            <svg width="34" height="34" viewBox="0 0 34 34">
                <rect width="34" height="34" fill="#050510" />
                <g fill="none" strokeWidth="3">
                    <path d="M16 4v12a4 4 0 1 1-4-4M16 4c0 4 3 6 7 6" stroke="#25f4ee" />
                    <path d="M18 6v12a4 4 0 1 1-4-4M18 6c0 4 3 6 7 6" stroke="#fe2c55" />
                    <path d="M17 5v12a4 4 0 1 1-4-4M17 5c0 4 3 6 7 6" stroke="#fff" />
                </g>
                <path d="M0 27l34-2-4 9H0z" fill="#ee3c50" />
                <path d="M8 30h3M13 29h3M18 30h3M23 29h3" stroke="#fff" strokeWidth="3" />
            </svg>
            <svg width="320" height="34" viewBox="0 0 320 34" fill="none" stroke="#f2f2f2" strokeWidth="4" strokeLinecap="round">
                <path d="M2 23a12 12 0 0 0 22 0M6 20h14" stroke="#fff" />
                <path d="M48 26a10 10 0 0 0 18 0" stroke="#fff" strokeWidth="7" />
                <path d="M84 16a20 20 0 0 1 24 0M90 23a10 10 0 0 1 12 0M96 30h1" stroke="#fff" />
                <path d="M146 31v-3M153 31v-8M160 31V13M167 31V7M174 31V4" />
                <path d="M208 31v-2M215 31v-7M221 31V19M228 31V13M235 31V6" />
                <rect x="252" y="4" width="50" height="28" rx="7" stroke="#ccc" strokeWidth="3" />
                <rect x="257" y="9" width="15" height="18" rx="2" fill="#eee" stroke="none" />
                <path d="M308 13v10" stroke="#ccc" />
                <text x="188" y="15" fill="#f2f2f2" stroke="none" fontSize="15" fontWeight="500" fontFamily="Roboto, sans-serif">4G</text>
            </svg>
        </PhoneStatus>
        <BackButton aria-label="返回"><ChevronLeft size={42} strokeWidth={3} /></BackButton>
    </>
);

const Player = () => (
    <>
        <VideoTitle>高压柜安装</VideoTitle>
        <Controls>
            <button aria-label="播放">
                <svg width="98" height="54" viewBox="0 0 98 54"><path d="M3 3v48l42-24z" fill="#fff" stroke="#fff" strokeWidth="5" strokeLinejoin="round" /></svg>
            </button>
            <Time $width={162}>1:55:21</Time>
            <Progress type="range" min="0" max="1000" defaultValue="989" aria-label="播放进度" />
            <Time $width={164}>1:57:39</Time>
            <button>倍速</button>
            <svg width="174" height="56" viewBox="0 0 174 56">
                <path d="M70 1h36q10 0 10 10v8l8 5-8 4v10q-6 4-20 10l-9 6-6-9H70q-8-2-8-10V11q0-10 8-10z" fill="#fff" />
                <path d="M75 27l8-3 3 3M90 23l12-2 4 3M85 18h10M76 33h8" stroke="#333" strokeWidth="3" fill="none" />
                <path d="M98 41l9 10 15-22" fill="none" stroke="#14b865" strokeWidth="6" />
            </svg>
            <CommentInput type="text" placeholder="说点什么..." aria-label="评论" />
        </Controls>
    </>
);

const App = () => (
    <Page>
        <GlobalStyle />
        <Desktop>
            <TopBars />
            <Body>
                <Sidebar>
                    <SidebarHead><button aria-label="收起"><ChevronsLeft size={12} /></button></SidebarHead>
                    <ProjectTree>
                        <li>
                            <RootNode><Expander aria-label="折叠" /><Drawing name="project" size={14} />整个项目</RootNode>
                            <ul>
                                {['高压柜的本体安装', '高压柜之间母线连接', '调试部分'].map(node => (
                                    <li key={node}>
                                        <LeafNode $active={node === '调试部分'}><File size={14} strokeWidth={1.5} /><span>{node}</span></LeafNode>
                                    </li>
                                ))}
                            </ul>
                        </li>
                    </ProjectTree>
                </Sidebar>
                <Work>
                    <Bill />
                    <HScroll><span /></HScroll>
                    <DetailTabs>
                        {['工料机显示', '单价构成', '标准换算', '换算信息', '安装费用', '特征及内容', '组价方案', '工程量明细', '反查图形工程量', '说明信息'].map(tab => (
                            <DetailTab key={tab} $active={tab === '工程量明细'}>{tab}</DetailTab>
                        ))}
                    </DetailTabs>
                    <Lower>
                        <FormulaPanel />
                        <CodePane />
                    </Lower>
                </Work>
            </Body>
            <StatusBar>
                <StatusPart>工程量清单项目计量规范(2013-河南)</StatusPart>
                <StatusPart>河南省通用安装工程预算定额(2016)(一般计税)</StatusPart>
                <StatusPart>第四册 电气设备安装工程</StatusPart>
                <Totals>
                    <span>工程造价:86594</span><span>人工费:36450</span><span>材料费:2790</span>
                    <span>机械费:21543</span><span>设备费:0</span><span>主材费:0</span>
                </Totals>
                <ViewButtons>
                    <button aria-label="打印"><Printer size={14} /></button>
                    <button aria-label="网格"><LayoutGrid size={14} /></button>
                    <button aria-label="面板"><PanelTop size={14} /></button>
                </ViewButtons>
                <Zoom>
                    <span>100%</span>
                    <Minus size={12} />
                    <input type="range" defaultValue="35" aria-label="缩放" />
                    <Plus size={16} />
                </Zoom>
            </StatusBar>
            <CadBar><span>x = 1486134 y = 10774</span>当前标注比例：1</CadBar>
            <CadStrip />
            <Slogan>
                <div>{'预\n算'}</div>
                <div>{'中\n天\n电\n建\n教\n你'}</div>
                <div>{'零\n基\n础\n学\n会\n电\n力\n预'}</div>
            </Slogan>
            <QueryDialog />
            <Banner>
                <h2>业务<br />范围</h2>
                <p>10kV配网预结算培训<br />主网变电预结算培训<br />主网输电预结算培训<br />承接电力行业预结算</p>
            </Banner>
            <MousePointer left={1464} top={646} size={9} />
            <MousePointer left={890} top={886} size={13} />
            <Dim />
        </Desktop>
        <PhoneTop />
        <Player />
    </Page>
);

export default App;
